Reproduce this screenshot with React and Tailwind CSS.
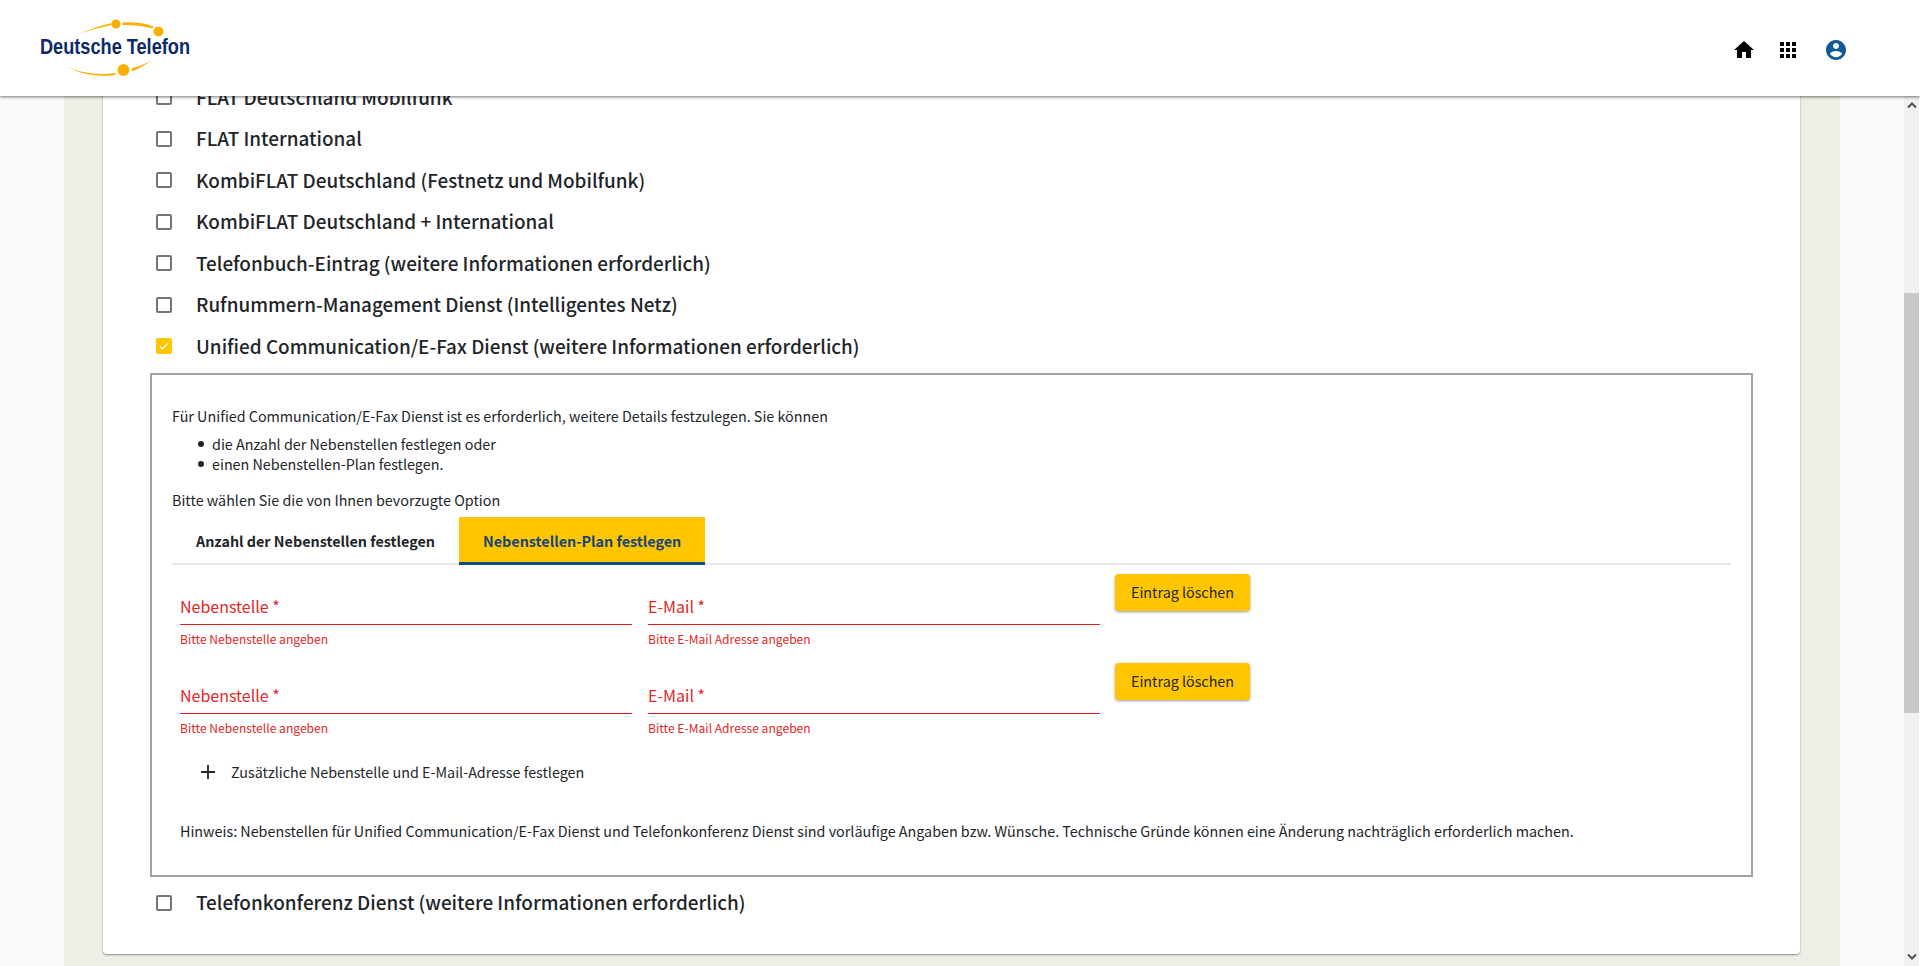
import React from 'react';

const serviceRows = [
    { label: 'FLAT Deutschland Mobilfunk' },
    { label: 'FLAT International' },
    { label: 'KombiFLAT Deutschland (Festnetz und Mobilfunk)' },
    { label: 'KombiFLAT Deutschland + International' },
    { label: 'Telefonbuch-Eintrag (weitere Informationen erforderlich)' },
    { label: 'Rufnummern-Management Dienst (Intelligentes Netz)' },
    { label: 'Unified Communication/E-Fax Dienst (weitere Informationen erforderlich)', checked: true },
];

const Logo = () => (
    <svg width="190" height="70" viewBox="0 0 190 70" className="block">
        <g transform="translate(0.5 1.5)" fill="#fbb000">
            <path d="M39 19 Q55 12 71 8.5 L71 10.5 Q55 14 39 19Z" />
            <circle cx="75.5" cy="9.5" r="4.5" />
            <path d="M82 8 Q100 7 113 12 L112 14 Q98 10 82 10.5Z" />
            <circle cx="118" cy="17" r="5" />
            <path d="M27 53 Q50 62 75 58.5 L75 60.5 Q50 64 27 53Z" />
            <circle cx="83" cy="55.5" r="6" />
            <path d="M91 54 Q102 51 111 46 Q103 52 92 57Z" />
        </g>
        <text x="0" y="41" textLength="150" lengthAdjust="spacingAndGlyphs" fontFamily="'Liberation Sans', sans-serif" fontWeight="700" fontSize="21.5" fill="#0b2a66">Deutsche Telefon</text>
    </svg>
);

const CheckBox = ({ checked }) => (
    checked ? (
        <span className="w-4 h-4 mt-[1px] rounded-[2px] bg-[#ffc600] flex items-center justify-center shrink-0">
            <svg width="12" height="12" viewBox="0 0 24 24" fill="none" stroke="#fff" strokeWidth="2.4">
                <path d="M4 13l5 5L20 6" />
            </svg>
        </span>
    ) : (
        <span className="w-4 h-4 mt-[1px] rounded-[2px] border-2 border-[#757575] bg-white shrink-0" />
    )
);

const ServiceRow = ({ label, checked }) => (
    <div className="h-[41.5px] flex items-center">
        <CheckBox checked={checked} />
        <span className="ml-[24px] text-[18.9px] leading-[28px] font-medium text-[#212529] whitespace-nowrap">{label}</span>
    </div>
);

const Field = ({ label, error }) => (
    <div className="w-[452px]">
        <div className="h-[58px] border-b border-[#e02020] flex items-end pb-[5.5px]">
            <span className="text-[16px] leading-[24px] text-[#e02828]">{label}</span>
        </div>
        <p className="mt-[6px] text-[12.1px] leading-[16px] text-[#e02828]">{error}</p>
    </div>
);

const ExtensionRow = () => (
    <div className="flex h-[89px] pl-[8px]">
        <Field label="Nebenstelle *" error="Bitte Nebenstelle angeben" />
        <div className="w-[16px]" />
        <Field label="E-Mail *" error="Bitte E-Mail Adresse angeben" />
        <button className="ml-[15px] mt-[7px] w-[135px] h-[37px] rounded bg-[#ffc600] text-[14.3px] text-[#212529] shadow-[0_1px_3px_rgba(0,0,0,0.4)]">
            Eintrag löschen
        </button>
    </div>
);

const BulletItem = ({ children }) => (
    <div className="flex items-center pl-[26px]">
        <span className="w-[6px] h-[6px] rounded-full bg-[#212529] mr-[8px]" />
        <span>{children}</span>
    </div>
);

const ScrollBar = () => (
    <div className="w-4 bg-[#f0f0f0] border-r border-white flex flex-col items-center justify-between relative">
        <svg width="12" height="8" viewBox="0 0 12 8" className="mt-[5px]">
            <path d="M2 6.5 L6 2.5 L10 6.5" fill="none" stroke="#505050" strokeWidth="2" />
        </svg>
        <div className="absolute left-0 right-0 top-[197px] h-[420px] bg-[#c8c8c8]" />
        <svg width="12" height="8" viewBox="0 0 12 8" className="mb-[5px]">
            <path d="M2 1.5 L6 5.5 L10 1.5" fill="none" stroke="#505050" strokeWidth="2" />
        </svg>
    </div>
);

export default function App() {
    return (
        <div className="h-screen flex flex-col overflow-hidden bg-white text-[#212529] font-['Noto_Sans_CJK_SC',sans-serif]">
            {/* Header */}
            <header className="relative z-10 h-[96px] shrink-0 bg-white shadow-[0_1px_3px_rgba(0,0,0,0.55)] flex items-center justify-between pl-[40px]">
                <Logo />
                <div className="flex items-center pr-[72px] mt-[4px]">
                    <svg width="24" height="24" viewBox="0 0 24 24" fill="#000" className="mr-5">
                        <path d="M10 20v-6h4v6h5v-8h3L12 3 2 12h3v8z" />
                    </svg>
                    <svg width="24" height="24" viewBox="0 0 24 24" fill="#000" className="mr-6">
                        <path d="M4 8h4V4H4v4zm6 12h4v-4h-4v4zm-6 0h4v-4H4v4zm0-6h4v-4H4v4zm6 0h4v-4h-4v4zm6-10v4h4V4h-4zm-6 4h4V4h-4v4zm6 6h4v-4h-4v4zm0 6h4v-4h-4v4z" />
                    </svg>
                    <svg width="24" height="24" viewBox="0 0 24 24" fill="#0f5a94">
                        <path d="M12 2C6.48 2 2 6.48 2 12s4.48 10 10 10 10-4.48 10-10S17.52 2 12 2zm0 3c1.66 0 3 1.34 3 3s-1.34 3-3 3-3-1.34-3-3 1.34-3 3-3zm0 14.2c-2.5 0-4.71-1.28-6-3.22.03-1.99 4-3.08 6-3.08 1.99 0 5.97 1.09 6 3.08-1.29 1.94-3.5 3.22-6 3.22z" />
                    </svg>
                </div>
            </header>

            <div className="flex-1 min-h-0 flex">
                <main className="flex-1 min-w-0 bg-[#fafafa] px-[64px] overflow-hidden">
                    <div className="-mt-[20px] h-[calc(100%+20px)] bg-[#eeeee6] pl-[39px] pr-[40px]">
                        <div className="bg-white rounded-b shadow-[0_1px_2px_rgba(0,0,0,0.4)] pl-[53px] pr-[47px] pb-[31px]">
                            {serviceRows.map((row) => (
                                <ServiceRow key={row.label} label={row.label} checked={row.checked} />
                            ))}

                            {/* Detail box */}
                            <div className="-ml-[6px] mt-[6px] h-[504px] border-2 border-[#a3a3a3] pl-[20px] pr-[20px] pt-[30px] text-[14.33px] leading-[22px]">
                                <p>Für Unified Communication/E-Fax Dienst ist es erforderlich, weitere Details festzulegen. Sie können</p>
                                <div className="mt-[7px] leading-[20px]">
                                    <BulletItem>die Anzahl der Nebenstellen festlegen oder</BulletItem>
                                    <BulletItem>einen Nebenstellen-Plan festlegen.</BulletItem>
                                </div>
                                <p className="mt-[15px]">Bitte wählen Sie die von Ihnen bevorzugte Option</p>

                                {/* Tabs */}
                                <div className="mt-[6px] flex border-b-2 border-[#e6e6e6]">
                                    <div className="h-[48px] -mb-[2px] px-[24px] pt-[1px] flex items-center font-bold text-[14.33px] text-[#212529]">
                                        Anzahl der Nebenstellen festlegen
                                    </div>
                                    <div className="h-[48px] -mb-[2px] px-[24px] pt-[3px] flex items-center font-bold text-[14.33px] text-[#17457a] bg-[#ffc600] border-b-[3px] border-[#0f4c81]">
                                        Nebenstellen-Plan festlegen
                                    </div>
                                </div>

                                <div className="pt-[2px]">
                                    <ExtensionRow />
                                    <ExtensionRow />
                                </div>

                                <div className="mt-[11px] pl-[28px] h-[32px] flex items-center">
                                    <svg width="16" height="16" viewBox="0 0 16 16" stroke="#212529" strokeWidth="1.8">
                                        <path d="M8 1v14M1 8h14" />
                                    </svg>
                                    <span className="ml-[15px]">Zusätzliche Nebenstelle und E-Mail-Adresse festlegen</span>
                                </div>

                                <p className="mt-[32px] pl-[8px]">
                                    Hinweis: Nebenstellen für Unified Communication/E-Fax Dienst und Telefonkonferenz Dienst sind vorläufige Angaben bzw. Wünsche. Technische Gründe können eine Änderung nachträglich erforderlich machen.
                                </p>
                            </div>

                            <div className="mt-[5px]">
                                <ServiceRow label="Telefonkonferenz Dienst (weitere Informationen erforderlich)" />
                            </div>
                        </div>
                    </div>
                </main>
                <ScrollBar />
            </div>
        </div>
    );
}
